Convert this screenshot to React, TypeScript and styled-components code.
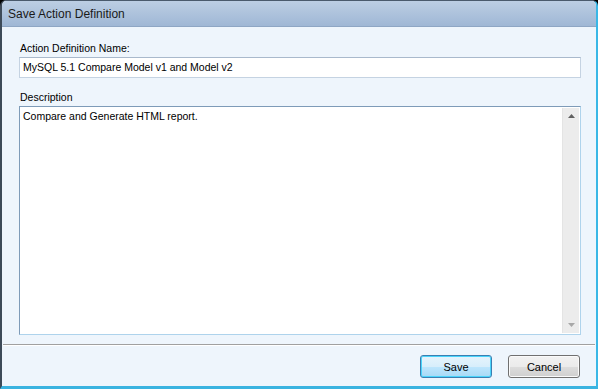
import React from "react";
import styled, { createGlobalStyle } from "styled-components";

const Global = createGlobalStyle`
  html, body { margin: 0; padding: 0; background: #000; }
  body { font-family: "Liberation Sans", Arial, sans-serif; }
`;

const Win = styled.div`
  width: 598px;
  height: 389px;
  box-sizing: border-box;
  display: flex;
  flex-direction: column;
  background: #eef5fc;
  border-left: 2px solid #3d4a58;
  border-right: 2px solid #39b7e6;
  border-top: 1px solid #4a5a6c;
  border-bottom: 3px solid #3ab3e0;
  border-top-left-radius: 6px;
  border-top-right-radius: 6px;
  overflow: hidden;
`;

const TitleBar = styled.div`
  height: 25px;
  flex: none;
  display: flex;
  align-items: center;
  padding-left: 6px;
  background: linear-gradient(#bccee3, #9fb7d5);
  border-bottom: 1px solid #8ea6c4;
  font-family: "Liberation Sans", Arial, sans-serif;
  font-size: 12px;
  color: #1a1a1a;
`;

const Content = styled.div`
  flex: 1;
  display: flex;
  flex-direction: column;
  padding: 15px 15px 0 17px;
`;

const Label = styled.div`
  font-size: 10.5px;
  color: #000;
  height: 13px;
  line-height: 13px;
  margin-left: 1px;
  margin-bottom: 2px;
`;

const Input = styled.div`
  height: 21px;
  box-sizing: border-box;
  border: 1px solid #c5d3e2;
  border-top-color: #a9b9cc;
  background: #fff;
  font-size: 10.5px;
  line-height: 19px;
  padding-left: 3px;
  color: #000;
  margin-bottom: 13px;
`;

const TextArea = styled.div`
  height: 229px;
  box-sizing: border-box;
  display: flex;
  background: #fff;
  border: 1px solid #aed3ec;
  border-top-color: #7e9bb8;
  border-left-color: #7e9bb8;
`;

const Text = styled.div`
  flex: 1;
  font-size: 10.5px;
  padding: 2px 3px;
  line-height: 14px;
`;

const ScrollBar = styled.div`
  width: 16px;
  margin: 1px 1px 1px 0;
  background: #ececec;
  border-left: 1px solid #e4e4e4;
  display: flex;
  flex-direction: column;
  justify-content: space-between;
  align-items: center;
  padding: 6px 0;
`;

const Footer = styled.div`
  margin-top: 9px;
  border-top: 1px solid #a0a0a0;
  margin-left: -16px;
  margin-right: -14px;
  display: flex;
  justify-content: flex-end;
  gap: 16px;
  padding: 10px 15px 0 0;
  box-shadow: inset 0 1px 0 #fff;
`;

const Button = styled.button<{ $default?: boolean }>`
  width: 72px;
  height: 23px;
  box-sizing: border-box;
  border-radius: 3px;
  font-family: "Liberation Sans", Arial, sans-serif;
  font-size: 11px;
  color: #000;
  padding: 0;
  border: 1px solid ${(p) => (p.$default ? "#3c7fb1" : "#707070")};
  background: ${(p) =>
    p.$default
      ? "linear-gradient(#e6f4fc 0%, #d8eefb 50%, #bee6fd 51%, #a7d9f5 100%)"
      : "linear-gradient(#f2f2f2 0%, #ebebeb 50%, #dddddd 51%, #cfcfcf 100%)"};
  box-shadow: ${(p) =>
    p.$default ? "inset 0 0 0 1px #49d4fb" : "inset 0 0 0 1px #fafafa"};
`;

const Arrow = ({ up }: { up?: boolean }) => (
  <svg width="7" height="4" viewBox="0 0 7 4">
    <path d={up ? "M0 4 L3.5 0 L7 4 Z" : "M0 0 L3.5 4 L7 0 Z"} fill={up ? "#606060" : "#a8a8a8"} />
  </svg>
);

export default function App() {
  return (
    <>
      <Global />
      <Win>
        <TitleBar>Save Action Definition</TitleBar>
        <Content>
          <Label>Action Definition Name:</Label>
          <Input>MySQL 5.1 Compare Model v1 and Model v2</Input>
          <Label>Description</Label>
          <TextArea>
            <Text>Compare and Generate HTML report.</Text>
            <ScrollBar>
              <Arrow up />
              <Arrow />
            </ScrollBar>
          </TextArea>
          <Footer>
            <Button $default>Save</Button>
            <Button>Cancel</Button>
          </Footer>
        </Content>
      </Win>
    </>
  );
}
